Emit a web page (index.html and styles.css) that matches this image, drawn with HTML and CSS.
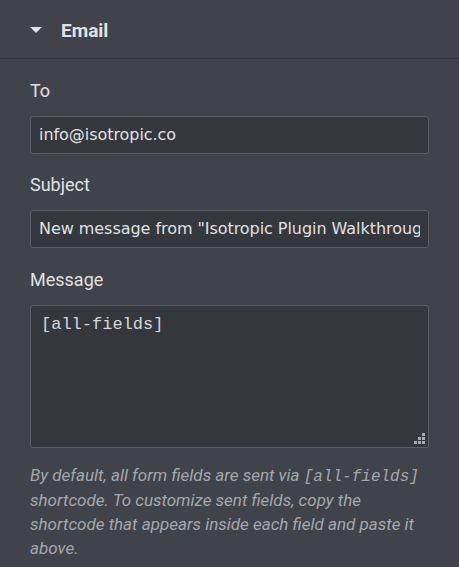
FILE: index.html
```html
<!DOCTYPE html>
<html>
<head>
<meta charset="utf-8">
<link rel="stylesheet" href="styles.css">
</head>
<body>
<div class="panel">
  <div class="section-head">
    <span class="caret"></span>
    <span class="section-title">Email</span>
  </div>
  <div class="section-body">
    <div class="control">
      <label class="label">To</label>
      <div class="input"><span class="input-text">info@isotropic.co</span></div>
    </div>
    <div class="control">
      <label class="label">Subject</label>
      <div class="input"><span class="input-text">New message from "Isotropic Plugin Walkthrough"</span></div>
    </div>
    <div class="control">
      <label class="label">Message</label>
      <div class="textarea">[all-fields]<span class="grip"></span></div>
    </div>
    <p class="help">By default, all form fields are sent via <code>[all-fields]</code> shortcode. To customize sent fields, copy the shortcode that appears inside each field and paste it above.</p>
  </div>
</div>
</body>
</html>
```
FILE: styles.css
```css
html, body {
  margin: 0;
  padding: 0;
  background: #404349;
}
.panel {
  width: 459px;
  height: 567px;
  background: #404349;
  font-family: Roboto, "Liberation Sans", sans-serif;
  color: #e0e1e3;
  overflow: hidden;
}
.section-head {
  height: 59px;
  border-bottom: 1px solid #33363a;
  display: flex;
  align-items: center;
  padding-left: 30px;
  box-sizing: border-box;
}
.caret {
  width: 0;
  height: 0;
  border-left: 6px solid transparent;
  border-right: 6px solid transparent;
  border-top: 6px solid #e0e1e3;
  margin-right: 19px;
  margin-top: 2px;
}
.section-title {
  font-weight: bold;
  font-size: 19px;
  margin-top: 2px;
}
.section-body {
  padding: 19.5px 30px 0 30px;
}
.control {
  margin-bottom: 19.5px;
}
.label {
  display: block;
  font-size: 18px;
  line-height: 24px;
  margin-bottom: 13px;
}
.input {
  height: 38px;
  box-sizing: border-box;
  border: 1px solid #5b5e63;
  border-radius: 3px;
  background: #34373c;
  padding: 0 8px;
  font-family: "DejaVu Sans", sans-serif;
  font-size: 16px;
  line-height: 36px;
  color: #e0e1e3;
  letter-spacing: -0.05px;
}
.input-text {
  display: block;
  white-space: nowrap;
  overflow: hidden;
}
.textarea {
  position: relative;
  height: 143px;
  box-sizing: border-box;
  border: 1px solid #5b5e63;
  border-radius: 3px;
  background: #34373c;
  padding: 9px 10px;
  font-family: "Liberation Mono", monospace;
  font-size: 17px;
  line-height: 20px;
  color: #d5d7da;
}
.grip {
  position: absolute;
  right: 3px;
  bottom: 3px;
  width: 11px;
  height: 11px;
  background:
    linear-gradient(#a8aaad, #a8aaad) 8px 0 / 3px 3px no-repeat,
    linear-gradient(#a8aaad, #a8aaad) 4px 4px / 3px 3px no-repeat,
    linear-gradient(#a8aaad, #a8aaad) 8px 4px / 3px 3px no-repeat,
    linear-gradient(#a8aaad, #a8aaad) 0 8px / 3px 3px no-repeat,
    linear-gradient(#a8aaad, #a8aaad) 4px 8px / 3px 3px no-repeat,
    linear-gradient(#a8aaad, #a8aaad) 8px 8px / 3px 3px no-repeat;
}
.help {
  margin: -3.5px 0 0 0;
  font-style: italic;
  font-size: 17px;
  line-height: 23.7px;
  color: #a4a8ae;
}
.help code {
  font-family: "Liberation Mono", monospace;
  font-size: 16px;
}
```
